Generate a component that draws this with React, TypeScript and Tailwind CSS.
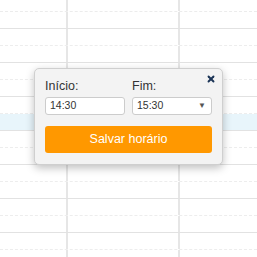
import { X } from "lucide-react";

const rows = Array.from({ length: 15 }, (_, i) => i);

export default function App() {
  return (
    <div className="relative w-[257px] h-[257px] overflow-hidden bg-white font-['Liberation_Sans',Arial,sans-serif]">
      {/* planilha de fundo */}
      <div className="flex flex-col">
        <div className="grid grid-cols-[68px_112px_1fr] h-[12px] border-b border-dashed border-[#ececec]">
          <div className="border-r-2 border-[#e6e6e6]" />
          <div className="border-r-2 border-[#e6e6e6]" />
          <div />
        </div>
        {rows.map((i) => (
          <div
            key={i}
            className={`grid grid-cols-[68px_112px_1fr] h-[17px] border-b ${
              i % 2 === 0 ? "border-solid border-[#e2e2e2]" : "border-dashed border-[#ededed]"
            } ${i === 6 ? "bg-[#e8f5fb]" : ""}`}
          >
            <div className="border-r-2 border-[#e6e6e6]" />
            <div className="border-r-2 border-[#e6e6e6]" />
            <div />
          </div>
        ))}
      </div>

      {/* popup de horário */}
      <div className="absolute left-[34px] top-[68px] w-[189px] rounded-[5px] border border-[#cfcfcf] bg-[#f3f3f3] px-[10px] pt-[9px] pb-[11px] shadow-[0_3px_8px_rgba(0,0,0,0.25)]">
        <button className="absolute right-[6px] top-[5px] text-[#1c3557]">
          <X size={10} strokeWidth={4.5} />
        </button>
        <div className="grid grid-cols-[80px_80px] gap-x-[7px]">
          <div className="flex flex-col">
            <span className="h-[16px] mb-[3px] text-[12.5px] leading-[16px] text-[#333]">Início:</span>
            <div className="flex h-[18px] items-center rounded-[3px] border border-[#cccccc] bg-white px-[4px] text-[10.5px] text-[#333]">
              14:30
            </div>
          </div>
          <div className="flex flex-col">
            <span className="h-[16px] mb-[3px] text-[12.5px] leading-[16px] text-[#333]">Fim:</span>
            <div className="flex h-[18px] items-center justify-between rounded-[3px] border border-[#cccccc] bg-white pl-[4px] pr-[5px] text-[10.5px] text-[#333]">
              <span>15:30</span>
              <span className="text-[8px] text-[#555]">▼</span>
            </div>
          </div>
        </div>
        <button className="mt-[11px] flex h-[27px] w-full items-center justify-center rounded-[3px] bg-[#ff9800] text-[12.5px] text-white">
          Salvar horário
        </button>
      </div>
    </div>
  );
}
